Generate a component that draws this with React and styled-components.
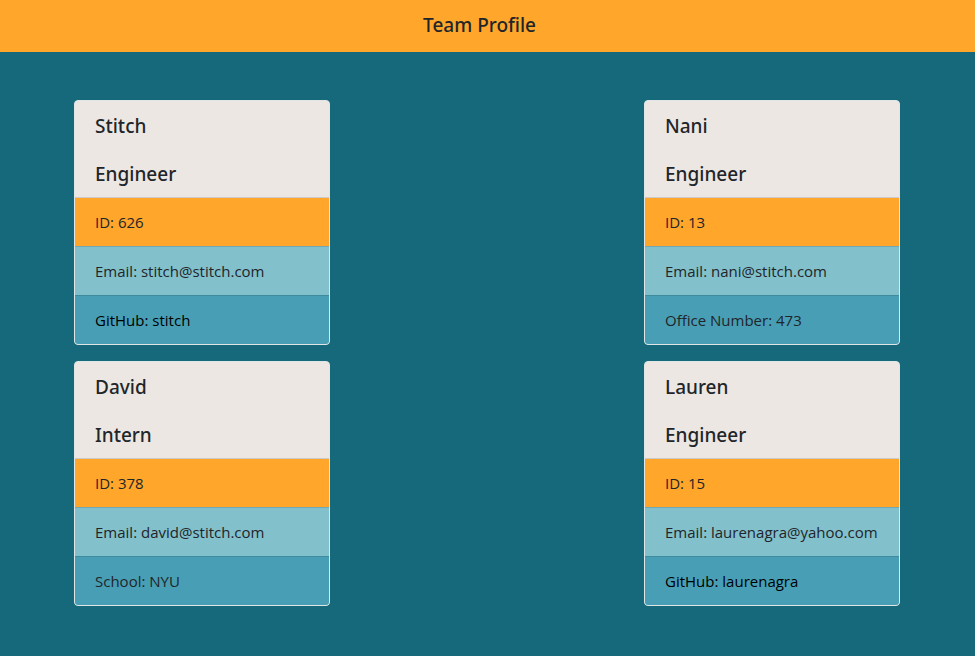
import React from "react";
import styled, { createGlobalStyle } from "styled-components";

const GlobalStyle = createGlobalStyle`
  *, *::before, *::after { box-sizing: border-box; }
  body {
    margin: 0;
    background: #16697a;
    color: #212529;
    font-family: "Open Sans", "Noto Sans", sans-serif;
    font-size: 15px;
    line-height: 24px;
  }
`;

const Header = styled.header`
  padding: 9px 16px 11px 0;
  background: #ffa62b;
  text-align: center;
`;

const Title = styled.h1`
  margin: 0;
  font-family: "Noto Sans", "Open Sans", sans-serif;
  font-size: 19px;
  font-weight: 500;
  line-height: 32px;
`;

const Team = styled.main`
  display: grid;
  grid-template-columns: repeat(2, 256px);
  justify-content: space-between;
  gap: 16px;
  padding: 48px 75px 48px 74px;
`;

const Card = styled.article`
  overflow: hidden;
  border: 1px solid #e0e6e6;
  border-radius: 4px;
  background: #ede7e3;
`;

const CardHeading = styled.h2`
  margin: 0;
  padding: 13px 20px 11px;
  font-family: "Noto Sans", "Open Sans", sans-serif;
  font-size: 19px;
  font-weight: 500;
  line-height: 24px;
`;

const Details = styled.ul`
  margin: 0;
  padding: 0;
  list-style: none;
  border-top: 1px solid #cfcaca;
`;

const Detail = styled.li`
  padding: 12px 20px;
  background: ${({ $tone }) => $tone};
  & + & { border-top: 1px solid rgba(0, 0, 0, 0.125); }
`;

const ProfileLink = styled.a`
  color: #000;
  text-decoration: none;
`;

const members = [
  { name: "Stitch", role: "Engineer", id: 626, email: "stitch@stitch.com", extra: "GitHub: stitch", href: "https://github.com/stitch" },
  { name: "Nani", role: "Engineer", id: 13, email: "nani@stitch.com", extra: "Office Number: 473" },
  { name: "David", role: "Intern", id: 378, email: "david@stitch.com", extra: "School: NYU" },
  { name: "Lauren", role: "Engineer", id: 15, email: "laurenagra@yahoo.com", extra: "GitHub: laurenagra", href: "https://github.com/laurenagra" },
];

export default function App() {
  return (
    <>
      <GlobalStyle />
      <Header><Title>Team Profile</Title></Header>
      <Team>
        {members.map((m) => (
          <Card key={m.name}>
            <CardHeading>{m.name}</CardHeading>
            <CardHeading as="h3">{m.role}</CardHeading>
            <Details>
              <Detail $tone="#ffa62b">ID: {m.id}</Detail>
              <Detail $tone="#82c0cc">Email: {m.email}</Detail>
              <Detail $tone="#489fb5">
                {m.href ? <ProfileLink href={m.href}>{m.extra}</ProfileLink> : m.extra}
              </Detail>
            </Details>
          </Card>
        ))}
      </Team>
    </>
  );
}
